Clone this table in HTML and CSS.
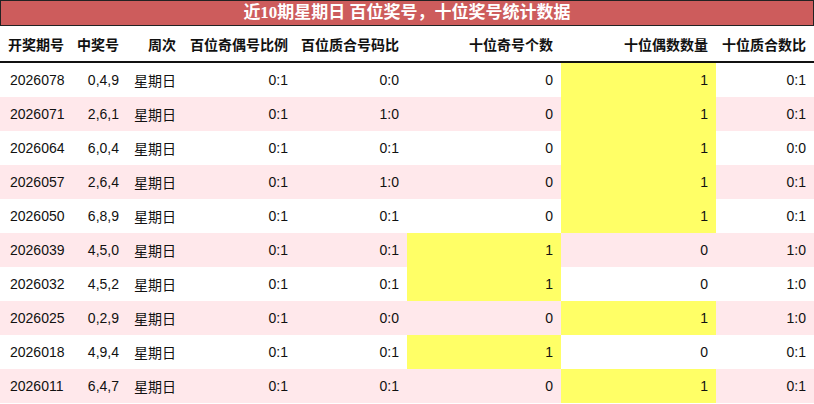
FILE: index.html
```html
<!DOCTYPE html>
<html lang="zh-CN">
<head>
<meta charset="utf-8">
<title>近10期星期日 百位奖号，十位奖号统计数据</title>
<link rel="stylesheet" href="styles.css">
</head>
<body>
<div class="panel">
  <div class="title">近10期星期日 百位奖号，十位奖号统计数据</div>
  <table class="stats">
    <colgroup>
      <col class="c1"><col class="c2"><col class="c3"><col class="c4"><col class="c5"><col class="c6"><col class="c7"><col class="c8">
    </colgroup>
    <thead>
      <tr>
        <th class="left">开奖期号</th>
        <th>中奖号</th>
        <th>周次</th>
        <th>百位奇偶号比例</th>
        <th>百位质合号码比</th>
        <th>十位奇号个数</th>
        <th>十位偶数数量</th>
        <th>十位质合数比</th>
      </tr>
    </thead>
    <tbody>
      <tr><td class="issue">2026078</td><td>0,4,9</td><td class="left">星期日</td><td>0:1</td><td>0:0</td><td>0</td><td class="hl">1</td><td>0:1</td></tr>
      <tr class="alt"><td class="issue">2026071</td><td>2,6,1</td><td class="left">星期日</td><td>0:1</td><td>1:0</td><td>0</td><td class="hl">1</td><td>0:1</td></tr>
      <tr><td class="issue">2026064</td><td>6,0,4</td><td class="left">星期日</td><td>0:1</td><td>0:1</td><td>0</td><td class="hl">1</td><td>0:0</td></tr>
      <tr class="alt"><td class="issue">2026057</td><td>2,6,4</td><td class="left">星期日</td><td>0:1</td><td>1:0</td><td>0</td><td class="hl">1</td><td>0:1</td></tr>
      <tr><td class="issue">2026050</td><td>6,8,9</td><td class="left">星期日</td><td>0:1</td><td>0:1</td><td>0</td><td class="hl">1</td><td>0:1</td></tr>
      <tr class="alt"><td class="issue">2026039</td><td>4,5,0</td><td class="left">星期日</td><td>0:1</td><td>0:1</td><td class="hl">1</td><td>0</td><td>1:0</td></tr>
      <tr><td class="issue">2026032</td><td>4,5,2</td><td class="left">星期日</td><td>0:1</td><td>0:1</td><td class="hl">1</td><td>0</td><td>1:0</td></tr>
      <tr class="alt"><td class="issue">2026025</td><td>0,2,9</td><td class="left">星期日</td><td>0:1</td><td>0:0</td><td>0</td><td class="hl">1</td><td>1:0</td></tr>
      <tr><td class="issue">2026018</td><td>4,9,4</td><td class="left">星期日</td><td>0:1</td><td>0:1</td><td class="hl">1</td><td>0</td><td>0:1</td></tr>
      <tr class="alt"><td class="issue">2026011</td><td>6,4,7</td><td class="left">星期日</td><td>0:1</td><td>0:1</td><td>0</td><td class="hl">1</td><td>0:1</td></tr>
    </tbody>
  </table>
</div>
</body>
</html>
```
FILE: styles.css
```css
html, body {
  margin: 0;
  padding: 0;
  background: #ffffff;
}

.panel {
  width: 814px;
  font-family: "Liberation Sans", "Noto Sans CJK SC", sans-serif;
  color: #111;
}

.title {
  height: 24px;
  line-height: 24px;
  border: 1px solid #222;
  background: #cd5c5c;
  color: #ffffff;
  font-family: "Liberation Serif", "Noto Sans CJK SC", serif;
  font-weight: bold;
  font-size: 17px;
  text-align: center;
}

.stats {
  width: 814px;
  border-collapse: collapse;
  table-layout: fixed;
  font-size: 14px;
}

.c1 { width: 71px; }
.c2 { width: 56px; }
.c3 { width: 57px; }
.c4 { width: 112px; }
.c5 { width: 111px; }
.c6 { width: 154px; }
.c7 { width: 155px; }
.c8 { width: 98px; }

.stats th {
  height: 35px;
  padding: 0 8px 0 0;
  text-align: right;
  font-weight: bold;
  color: #111;
  border-bottom: 2px solid #111;
  white-space: nowrap;
}

.stats td {
  height: 34px;
  padding: 0 8px 0 0;
  text-align: right;
  white-space: nowrap;
}

.stats th.left,
.stats td.left {
  text-align: left;
  padding: 0 0 0 7px;
}

.stats th.left {
  padding-left: 8px;
}

.stats td.issue {
  text-align: left;
  padding: 0 0 0 10px;
}

.stats tr.alt td {
  background: #ffe8eb;
}

.stats td.hl,
.stats tr.alt td.hl {
  background: #ffff66;
}
```
